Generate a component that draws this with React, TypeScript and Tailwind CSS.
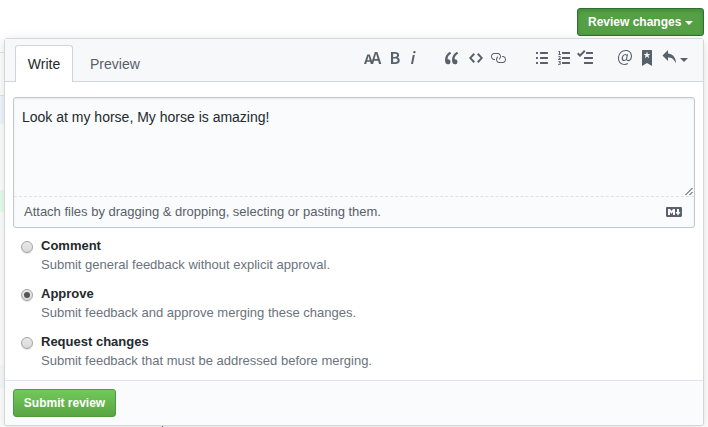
import React from "react";

const paths = {
  textSize:
    "M13.62 9.08L12.1 3.66h-.06l-1.5 5.42h3.08zM5.7 10.13S4.68 6.52 4.53 6.02h-.08l-1.13 4.11H5.7zM17.31 14h-2.25l-.95-3.25h-4.07L9.09 14H6.84l-.69-2.33H2.87L2.17 14H0l3.3-9.59h2.5l2.17 6.34L10.86 2h2.52l3.94 12h-.01z",
  bold: "M1 2h3.83c2.48 0 4.3.75 4.3 2.95 0 1.14-.63 2.23-1.67 2.61v.06c1.33.3 2.3 1.23 2.3 2.86 0 2.39-1.97 3.52-4.61 3.52H1V2zm3.66 4.95c1.67 0 2.38-.66 2.38-1.69 0-1.17-.78-1.61-2.34-1.61H3.13v3.3h1.53zm.27 5.39c1.77 0 2.75-.64 2.75-1.98 0-1.27-.95-1.81-2.75-1.81h-1.8v3.8h1.8v-.01z",
  italic:
    "M2.81 5h1.98L3 14H1l1.81-9zm.36-2.7c0-.7.58-1.3 1.33-1.3.56 0 1.13.38 1.13 1.03 0 .75-.59 1.3-1.33 1.3-.58 0-1.13-.38-1.13-1.03z",
  quote:
    "M6.16 3.5C3.73 5.06 2.55 6.67 2.55 9.36c.16-.05.3-.05.44-.05 1.27 0 2.5.86 2.5 2.41 0 1.61-1.03 2.61-2.5 2.61-1.9 0-2.99-1.52-2.99-4.25 0-3.8 1.75-6.53 5.02-8.42L6.16 3.5zm7 0c-2.43 1.56-3.61 3.17-3.61 5.86.16-.05.3-.05.44-.05 1.27 0 2.5.86 2.5 2.41 0 1.61-1.03 2.61-2.5 2.61-1.89 0-2.98-1.52-2.98-4.25 0-3.8 1.75-6.53 5.02-8.42l1.14 1.84h-.01z",
  code: "M9.5 3L8 4.5 11.5 8 8 11.5 9.5 13 14 8 9.5 3zm-5 0L0 8l4.5 5L6 11.5 2.5 8 6 4.5 4.5 3z",
  link: "M4 9h1v1H4c-1.5 0-3-1.69-3-3.5S2.55 3 4 3h4c1.45 0 3 1.69 3 3.5 0 1.41-.91 2.72-2 3.25V8.59c.58-.45 1-1.27 1-2.09C10 5.22 8.98 4 8 4H4c-.98 0-2 1.22-2 2.5S3 9 4 9zm9-3h-1v1h1c1 0 2 1.22 2 2.5S13.98 12 13 12H9c-.98 0-2-1.22-2-2.5 0-.83.42-1.64 1-2.09V6.25c-1.09.53-2 1.84-2 3.25C6 11.31 7.55 13 9 13h4c1.45 0 3-1.69 3-3.5S14.5 6 13 6z",
  unordered:
    "M2 13c0 .59 0 1-.59 1H.59C0 14 0 13.59 0 13c0-.59 0-1 .59-1h.81c.59 0 .59.41.59 1H2zm2.59-9h6.81c.59 0 .59-.41.59-1 0-.59 0-1-.59-1H4.59C4 2 4 2.41 4 3c0 .59 0 1 .59 1zM1.41 7H.59C0 7 0 7.41 0 8c0 .59 0 1 .59 1h.81c.59 0 .59-.41.59-1 0-.59 0-1-.59-1h.01zm0-5H.59C0 2 0 2.41 0 3c0 .59 0 1 .59 1h.81c.59 0 .59-.41.59-1 0-.59 0-1-.59-1h.01zm10 5H4.59C4 7 4 7.41 4 8c0 .59 0 1 .59 1h6.81c.59 0 .59-.41.59-1 0-.59 0-1-.59-1h.01zm0 5H4.59C4 12 4 12.41 4 13c0 .59 0 1 .59 1h6.81c.59 0 .59-.41.59-1 0-.59 0-1-.59-1h.01z",
  ordered:
    "M12 13c0 .59 0 1-.59 1H4.59C4 14 4 13.59 4 13c0-.59 0-1 .59-1h6.81c.59 0 .59.41.59 1H12zM4.59 4h6.81c.59 0 .59-.41.59-1 0-.59 0-1-.59-1H4.59C4 2 4 2.41 4 3c0 .59 0 1 .59 1zm6.81 3H4.59C4 7 4 7.41 4 8c0 .59 0 1 .59 1h6.81c.59 0 .59-.41.59-1 0-.59 0-1-.59-1zM2 1h-.72c-.3.19-.58.25-1.03.34V2H1v2.14H.16V5H3v-.86H2V1zm.25 8.13c-.17 0-.45.03-.66.06.53-.56 1.14-1.25 1.14-1.89C2.72 6.52 2.17 6 1.38 6c-.59 0-.97.2-1.38.64l.58.58c.19-.19.38-.38.64-.38.28 0 .48.16.48.52 0 .53-.77 1.2-1.7 2.06V10h3l-.09-.88h-.66v.01zm-.08 3.78v-.03c.44-.19.64-.47.64-.86 0-.7-.56-1.11-1.44-1.11-.48 0-.89.19-1.28.52l.55.64c.25-.2.44-.31.69-.31.27 0 .42.13.42.36 0 .27-.2.44-.86.44v.75c.83 0 .98.17.98.47 0 .25-.23.38-.58.38-.28 0-.56-.14-.81-.38l-.48.66c.3.36.77.56 1.41.56.83 0 1.53-.41 1.53-1.16 0-.5-.31-.81-.77-.94v.01z",
  tasklist:
    "M15.41 9H7.59C7 9 7 8.59 7 8c0-.59 0-1 .59-1h7.81c.59 0 .59.41.59 1 0 .59 0 1-.59 1h.01zM9.59 4C9 4 9 3.59 9 3c0-.59 0-1 .59-1h5.81c.59 0 .59.41.59 1 0 .59 0 1-.59 1H9.59zM0 3.91l1.41-1.3L3 4.2 7.09 0 8.5 1.41 3 6.91l-3-3zM7.59 12h7.81c.59 0 .59.41.59 1 0 .59 0 1-.59 1H7.59C7 14 7 13.59 7 13c0-.59 0-1 .59-1z",
  mention:
    "M6.58 15c1.25 0 2.52-.31 3.56-.94l-.42-.94c-.84.52-1.89.83-3.03.83-3.23 0-5.64-2.08-5.64-5.72 0-4.37 3.23-7.18 6.58-7.18 3.45 0 5.22 2.19 5.22 5.2 0 2.39-1.34 3.86-2.5 3.86-1.05 0-1.36-.73-1.05-2.19l.73-3.75H8.98l-.11.72c-.41-.63-.94-.83-1.56-.83-2.19 0-3.66 2.39-3.66 4.38 0 1.67.94 2.61 2.3 2.61.84 0 1.67-.53 2.3-1.25.11.94.94 1.45 1.98 1.45 1.67 0 3.77-1.67 3.77-5C14 2.61 11.59 0 7.83 0 3.66 0 0 3.33 0 8.33 0 12.71 2.92 15 6.58 15zm-.31-5c-.73 0-1.36-.52-1.36-1.67 0-1.45.94-3.22 2.41-3.22.52 0 .84.2 1.25.83l-.52 3.02c-.63.73-1.25 1.05-1.78 1.05V10z",
  bookmark:
    "M9 0H1C.27 0 0 .27 0 1v15l5-3.09L10 16V1c0-.73-.27-1-1-1zm-.78 4.25L6.36 5.61l.72 2.16c.06.22-.02.28-.2.17L5 6.6 3.12 7.94c-.19.11-.25.05-.2-.17l.72-2.16-1.86-1.36c-.17-.16-.14-.23.09-.23l2.3-.03.7-2.16h.25l.7 2.16 2.3.03c.23 0 .27.08.09.23h.01z",
  reply: "M6 3.5c3.92.44 8 3.125 8 10-2.312-5.062-4.75-6-8-6V11L.5 5.5 6 0v3.5z",
  markdown:
    "M14.85 3H1.15C.52 3 0 3.52 0 4.15v7.69C0 12.48.52 13 1.15 13h13.69c.64 0 1.15-.52 1.15-1.15v-7.7C16 3.52 15.48 3 14.85 3zM9 11H7V8L5.5 9.92 4 8v3H2V5h2l1.5 2L7 5h2v6zm2.99.5L9.5 8H11V5h2v3h1.5l-2.51 3.5z",
};

function Icon({ name, width }: { name: keyof typeof paths; width: number }) {
  return (
    <svg width={width} height={16} viewBox={`0 0 ${width} 16`} fill="currentColor" className="shrink-0" aria-hidden="true">
      <path fillRule="evenodd" d={paths[name]} />
    </svg>
  );
}

function Toolbar() {
  return (
    <div className="mt-[11px] mr-[15px] ml-auto flex h-4 text-[#586069]">
      <div className="flex gap-2">
        <Icon name="textSize" width={18} />
        <div className="flex gap-2.5">
          <Icon name="bold" width={10} />
          <Icon name="italic" width={6} />
        </div>
      </div>
      <div className="ml-[29px] flex gap-2.5">
        <Icon name="quote" width={14} />
        <Icon name="code" width={14} />
      </div>
      <div className="ml-[7px] flex">
        <Icon name="link" width={16} />
      </div>
      <div className="ml-[30px] flex gap-2.5">
        <Icon name="unordered" width={12} />
        <Icon name="ordered" width={12} />
      </div>
      <div className="ml-[7px] flex">
        <Icon name="tasklist" width={16} />
      </div>
      <div className="ml-[25px] flex gap-2.5">
        <Icon name="mention" width={14} />
        <Icon name="bookmark" width={10} />
        <Icon name="reply" width={14} />
      </div>
      <span className="mt-2 ml-1 h-0 w-0 border-x-4 border-t-4 border-x-transparent border-t-[#586069]" />
    </div>
  );
}

const options = [
  { title: "Comment", note: "Submit general feedback without explicit approval.", checked: false },
  { title: "Approve", note: "Submit feedback and approve merging these changes.", checked: true },
  { title: "Request changes", note: "Submit feedback that must be addressed before merging.", checked: false },
];

function Option({ title, note, checked }: { title: string; note: string; checked: boolean }) {
  return (
    <label className="flex h-12">
      <span className="mt-[7px] flex h-3 w-3 shrink-0 items-center justify-center rounded-full border border-[#a3a3a3] bg-linear-to-b from-[#eaeaea] to-[#d9d9d9] shadow-[0_1px_1px_rgba(0,0,0,0.12)]">
        {checked && <span className="h-1.5 w-1.5 rounded-full bg-[#555555]" />}
      </span>
      <span className="ml-2 pt-0.5 text-[13px] leading-[19px]">
        <span className="block font-bold text-[#24292e]">{title}</span>
        <span className="block text-[#6a737d]">{note}</span>
      </span>
    </label>
  );
}

export default function App() {
  return (
    <div className="relative flex h-[427px] w-[708px] flex-col overflow-hidden bg-white font-['Liberation_Sans',Arial,sans-serif] text-[#24292e]">
      {/* Slivers of the diff page that show behind the popover */}
      <div className="absolute top-[52px] left-0 h-px w-1 bg-[#e1e4e8]" />
      <div className="absolute top-[95px] left-0 h-[29px] w-[5px] border-t border-[#dde4ec] bg-[#f1f8ff]" />
      <div className="absolute top-[190px] left-0 h-[22px] w-[5px] bg-[#e6ffed]" />
      <div className="absolute top-[365px] left-0 h-[23px] w-[5px] bg-[#fafbfc]" />
      <div className="absolute top-[426px] left-[162px] z-10 h-px w-px bg-[#6f42c1]" />

      <button className="mt-2 mr-1 flex h-7 w-[127px] items-center self-end rounded-[3px] border border-[#2f6f34] bg-[#55a044] pl-2.5 text-xs font-bold text-white shadow-[inset_0_2px_4px_rgba(0,60,10,0.2)]">
        Review changes
        <span className="mt-0.5 ml-1 h-0 w-0 border-x-4 border-t-4 border-x-transparent border-t-white" />
      </button>

      <section className="relative mt-0.5 ml-1 flex h-[388px] w-[700px] flex-col rounded-[3px] border border-[#d4d6d8] bg-white shadow-[0_3px_12px_rgba(27,31,35,0.15)]">
        <header className="flex h-[43px] shrink-0 border-b border-[#d1d5da] bg-[#f6f8fa] pl-2.5">
          <div className="mt-1.5 flex h-[37px] w-[58px] justify-center rounded-t-[3px] border border-b-0 border-[#d1d5da] bg-white pt-2 text-sm leading-[21px]">
            Write
          </div>
          <div className="mt-[15px] ml-[17px] text-sm leading-[21px] text-[#586069]">Preview</div>
          <Toolbar />
        </header>

        <div className="mx-2 mt-[15px] flex h-[131px] shrink-0 flex-col rounded-[3px] border border-[#c3c8cf] bg-[#fafbfc] shadow-[inset_0_1px_2px_rgba(27,31,35,0.075)]">
          <div className="flex h-[99px] justify-between border-b border-dashed border-[#dfe2e5]">
            <p className="pt-[9px] pl-2 text-sm leading-[21px]">Look at my horse, My horse is amazing!</p>
            <svg width="9" height="9" viewBox="0 0 9 9" className="self-end" stroke="#333" strokeWidth="1" aria-hidden="true">
              <path d="M0.5 8L7.5 1M4.5 8L7.5 5" />
            </svg>
          </div>
          <div className="flex h-[30px] items-center justify-between pr-3 pl-2.5 text-[13px] text-[#586069]">
            <span>Attach files by dragging &amp; dropping, selecting or pasting them.</span>
            <Icon name="markdown" width={16} />
          </div>
        </div>

        <div className="mt-[5px] flex flex-col pt-px pl-4">
          {options.map((o) => (
            <Option key={o.title} {...o} />
          ))}
        </div>

        <footer className="mt-auto h-[45px] shrink-0 rounded-b-[3px] border-t border-[#e1e4e8] bg-[#fafbfc] px-2 pt-2">
          <button className="flex h-7 w-[103px] items-center justify-center rounded-[3px] border border-[#4f9a3c] bg-linear-to-b from-[#71c959] to-[#5aa544] text-xs font-bold text-white">
            Submit review
          </button>
        </footer>
      </section>
    </div>
  );
}
